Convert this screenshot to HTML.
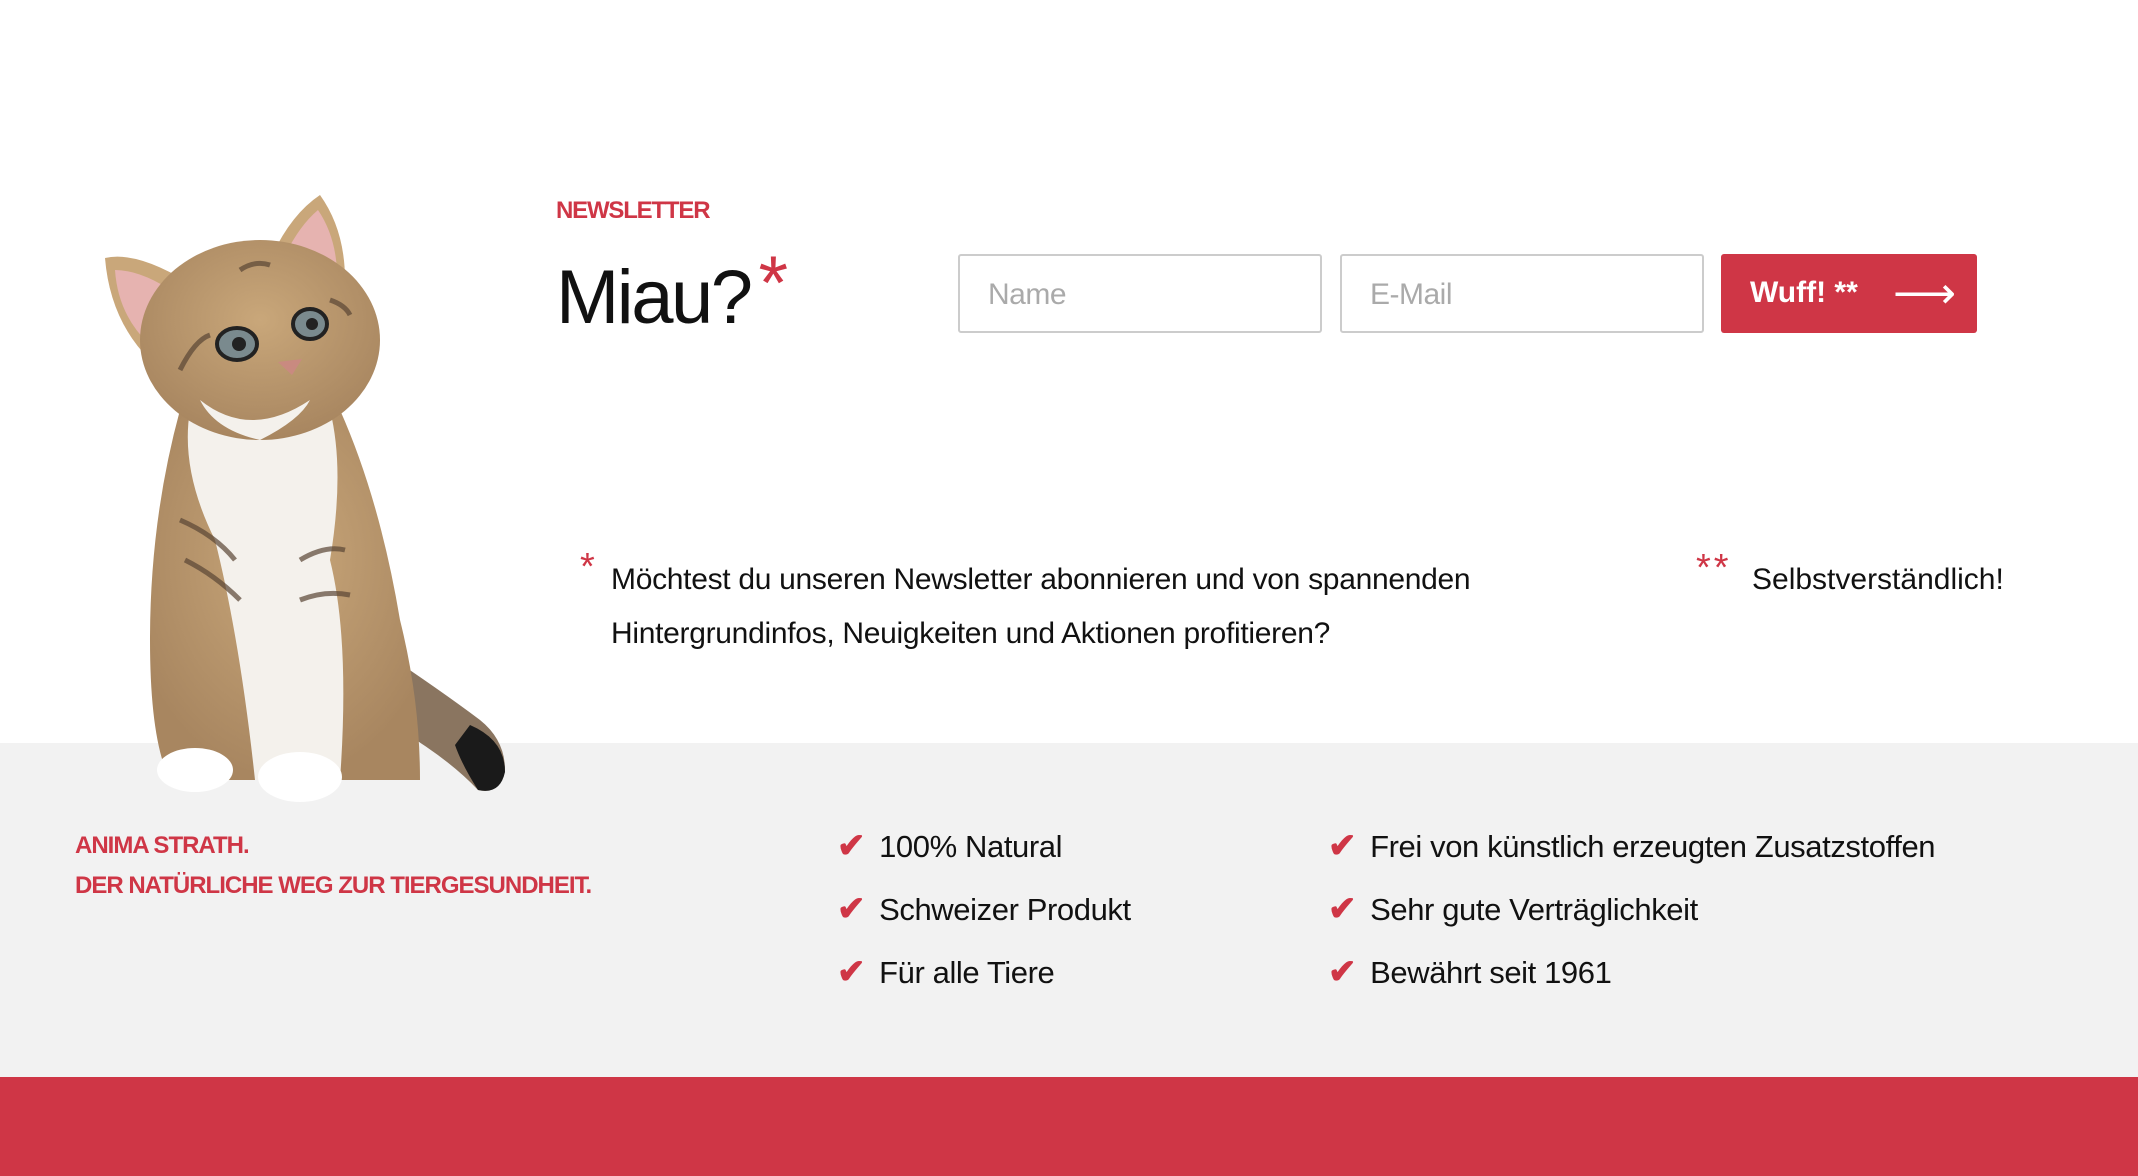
<!DOCTYPE html>
<html><head><meta charset="utf-8"><style>
*{margin:0;padding:0;box-sizing:border-box}
body{width:2138px;height:1176px;position:relative;background:#fff;font-family:"Liberation Sans",sans-serif;overflow:hidden;color:#111}
.abs{position:absolute;white-space:nowrap}
.red{color:#cf3646}
.grey{position:absolute;left:0;top:743px;width:2138px;height:335px;background:#f2f2f2}
.bar{position:absolute;left:0;top:1077px;width:2138px;height:99px;background:#cf3646}
.inp{position:absolute;top:254px;height:79px;border:2px solid #ccc;border-radius:3px;background:#fff;color:#aaa;font-size:30px;padding:22px 0 0 28px;letter-spacing:-0.5px}
.btn{position:absolute;left:1721px;top:254px;width:256px;height:79px;background:#cf3646;border-radius:3px;color:#fff;font-weight:bold;font-size:30px;padding:22px 0 0 29px}
.chk{font-size:31px;letter-spacing:-0.4px}
.chk span{color:#cf3646;font-weight:bold;margin-right:14px;font-size:34px}
</style></head><body>
<div class="grey"></div>
<div class="bar"></div>
<svg class="abs" style="left:0;top:0" width="560" height="830" viewBox="0 0 560 830">
 <defs>
  <radialGradient id="fur" cx="50%" cy="40%" r="60%"><stop offset="0" stop-color="#c9a77a"/><stop offset="1" stop-color="#a88660"/></radialGradient>
 </defs>
 <path d="M380 650 Q440 690 480 720 Q505 740 505 770 Q500 795 478 790 Q450 760 400 730 Z" fill="#8a7560"/>
 <path d="M470 725 Q505 740 505 772 Q500 795 478 790 Q462 765 455 745 Z" fill="#1a1a1a"/>
 <path d="M180 410 Q150 520 150 640 Q150 740 170 780 L420 780 Q420 700 400 620 Q380 500 340 410 Z" fill="url(#fur)"/>
 <path d="M190 410 Q180 470 215 540 Q240 640 255 780 L340 780 Q350 640 330 560 Q345 470 330 410 Z" fill="#f4f1ec"/>
 <g stroke="#5a4635" stroke-width="5" fill="none" opacity=".7">
  <path d="M180 520 Q215 535 235 560"/><path d="M185 560 Q215 575 240 600"/><path d="M300 560 Q325 545 345 550"/><path d="M300 600 Q325 590 350 595"/>
 </g>
 <ellipse cx="195" cy="770" rx="38" ry="22" fill="#fff"/>
 <ellipse cx="300" cy="777" rx="42" ry="25" fill="#fff"/>
 <path d="M105 258 Q140 250 200 290 L150 360 Q110 320 105 258Z" fill="#c9a77a"/>
 <path d="M115 270 Q145 270 185 300 L150 345 Q118 315 115 270Z" fill="#e6b3b0"/>
 <path d="M320 195 Q345 230 345 280 L270 260 Q290 215 320 195Z" fill="#c9a77a"/>
 <path d="M318 210 Q335 235 337 270 L285 255 Q300 225 318 210Z" fill="#e6b3b0"/>
 <ellipse cx="260" cy="340" rx="120" ry="100" fill="url(#fur)"/>
 <path d="M200 400 Q250 440 310 400 Q300 420 260 440 Q215 430 200 400Z" fill="#f4f1ec"/>
 <ellipse cx="237" cy="344" rx="20" ry="16" fill="#7a8a8e" stroke="#222" stroke-width="4"/>
 <circle cx="239" cy="344" r="7" fill="#222"/>
 <ellipse cx="310" cy="324" rx="17" ry="15" fill="#7a8a8e" stroke="#222" stroke-width="4"/>
 <circle cx="312" cy="324" r="6" fill="#222"/>
 <path d="M278 362 L302 359 L292 375Z" fill="#c98a80"/>
 <g stroke="#5a4635" stroke-width="5" fill="none" opacity=".7">
  <path d="M180 370 Q195 340 210 335"/><path d="M240 270 Q255 260 270 265"/><path d="M330 300 Q345 305 350 315"/>
 </g>
</svg>
<div class="abs red" style="left:556px;top:197px;font-size:24px;font-weight:bold;letter-spacing:-1.2px">NEWSLETTER</div>
<div class="abs" style="left:556px;top:240px;font-size:76px;letter-spacing:-2.5px">Miau?<span class="red" style="font-size:76px;vertical-align:14px;margin-left:8px">*</span></div>
<div class="inp" style="left:958px;width:364px">Name</div>
<div class="inp" style="left:1340px;width:364px">E-Mail</div>
<div class="btn">Wuff! **<span style="position:absolute;left:172px;top:14px;font-weight:normal;font-size:44px">⟶</span></div>
<div class="abs red" style="left:580px;top:546px;font-size:38px">*</div>
<div class="abs" style="left:611px;top:553px;font-size:30px;line-height:54px;letter-spacing:-0.3px">Möchtest du unseren Newsletter abonnieren und von spannenden<br>Hintergrundinfos, Neuigkeiten und Aktionen profitieren?</div>
<div class="abs red" style="left:1696px;top:547px;font-size:38px;letter-spacing:3px">**</div>
<div class="abs" style="left:1752px;top:553px;font-size:30px;line-height:54px">Selbstverständlich!</div>
<div class="abs red" style="left:75px;top:826px;font-size:24px;font-weight:bold;line-height:40px;letter-spacing:-1px">ANIMA STRATH.<br>DER NATÜRLICHE WEG ZUR TIERGESUNDHEIT.</div>
<div class="abs chk" style="left:837px;top:826px"><span>✔</span>100% Natural</div>
<div class="abs chk" style="left:837px;top:889px"><span>✔</span>Schweizer Produkt</div>
<div class="abs chk" style="left:837px;top:952px"><span>✔</span>Für alle Tiere</div>
<div class="abs chk" style="left:1328px;top:826px"><span>✔</span>Frei von künstlich erzeugten Zusatzstoffen</div>
<div class="abs chk" style="left:1328px;top:889px"><span>✔</span>Sehr gute Verträglichkeit</div>
<div class="abs chk" style="left:1328px;top:952px"><span>✔</span>Bewährt seit 1961</div>
</body></html>
